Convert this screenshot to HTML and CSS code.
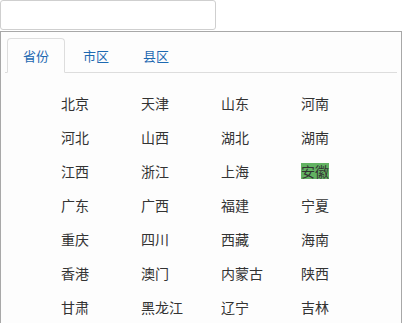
FILE: index.html
```html
<!DOCTYPE html>
<html>
<head>
<meta charset="utf-8">
<link rel="stylesheet" href="styles.css">
</head>
<body>
<div class="picker">
  <input class="city-input" type="text">
  <div class="panel">
    <ul class="tabs">
      <li class="tab active">省份</li>
      <li class="tab">市区</li>
      <li class="tab">县区</li>
    </ul>
    <ul class="cities">
      <li><span>北京</span></li><li><span>天津</span></li><li><span>山东</span></li><li><span>河南</span></li>
      <li><span>河北</span></li><li><span>山西</span></li><li><span>湖北</span></li><li><span>湖南</span></li>
      <li><span>江西</span></li><li><span>浙江</span></li><li><span>上海</span></li><li><span class="selected">安徽</span></li>
      <li><span>广东</span></li><li><span>广西</span></li><li><span>福建</span></li><li><span>宁夏</span></li>
      <li><span>重庆</span></li><li><span>四川</span></li><li><span>西藏</span></li><li><span>海南</span></li>
      <li><span>香港</span></li><li><span>澳门</span></li><li><span>内蒙古</span></li><li><span>陕西</span></li>
      <li><span>甘肃</span></li><li><span>黑龙江</span></li><li><span>辽宁</span></li><li><span>吉林</span></li>
    </ul>
  </div>
</div>
</body>
</html>
```

FILE: styles.css
```css
html, body {
  margin: 0;
  padding: 0;
  background: #fff;
  font-family: "Noto Sans CJK SC", "Liberation Sans", sans-serif;
  color: #333;
  overflow: hidden;
}

.picker {
  display: flex;
  flex-direction: column;
  width: 403px;
}

.city-input {
  box-sizing: border-box;
  width: 216px;
  height: 30px;
  margin: 0 0 1px 0;
  border: 1px solid #cfcfcf;
  border-radius: 3px;
  background: #fff;
  outline: none;
}

.panel {
  box-sizing: border-box;
  width: 402px;
  border: 1px solid #a8a8a8;
  background: #fdfdfd;
  padding: 6px 4px 0 4px;
}

.tabs {
  display: flex;
  list-style: none;
  margin: 0;
  padding: 0 0 0 2px;
  border-bottom: 1px solid #dddddd;
}

.tab {
  padding: 8px 15px;
  margin-right: 2px;
  margin-bottom: -1px;
  font-size: 13px;
  line-height: 17px;
  height: 17px;
  color: #1d69b1;
  border: 1px solid transparent;
  border-radius: 4px 4px 0 0;
}

.tab.active {
  border-color: #dddddd;
  border-bottom-color: #fdfdfd;
  background: #fdfdfd;
}

.cities {
  display: grid;
  grid-template-columns: repeat(4, 80px);
  list-style: none;
  margin: 0;
  padding: 13px 0 0 56px;
}

.cities li {
  display: flex;
  align-items: center;
  font-size: 14px;
  height: 34px;
  color: #333;
}

.cities span {
  display: inline-block;
  line-height: 16px;
  height: 16px;
}

.cities .selected {
  background: #62b262;
}
```
